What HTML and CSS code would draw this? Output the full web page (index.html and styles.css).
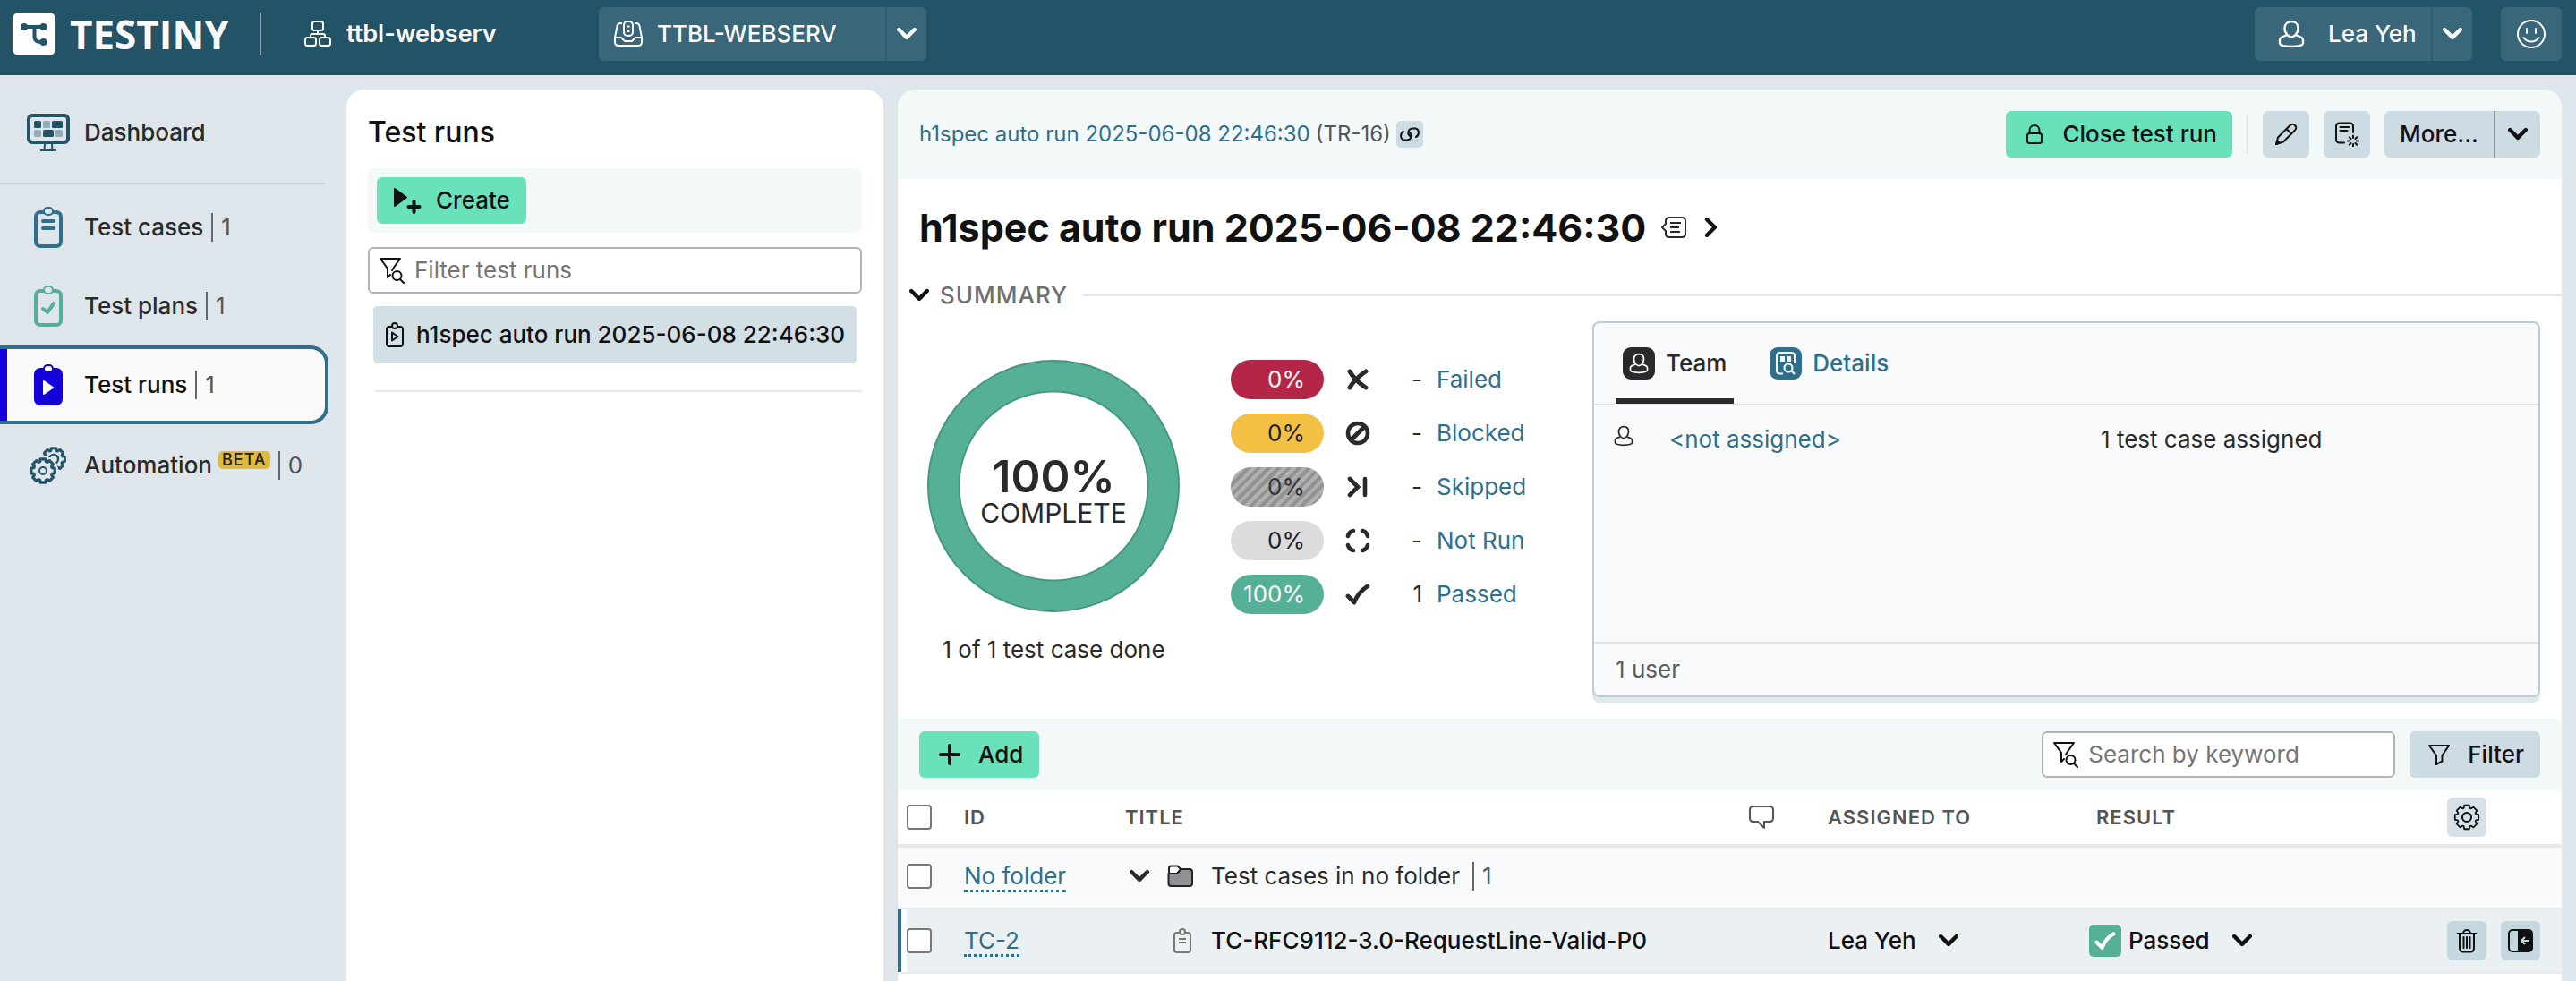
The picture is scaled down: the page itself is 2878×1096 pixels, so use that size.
FILE: index.html
```html
<!DOCTYPE html>
<html lang="en">
<head>
<meta charset="utf-8">
<meta name="viewport" content="width=device-width, initial-scale=1">
<title>Test runs - Testiny</title>
<link rel="stylesheet" href="styles.css">
</head>
<body>
<svg class="sprite" aria-hidden="true">
  <symbol id="chevron" viewBox="0 0 20 20"><path d="M2 5.500l8 8 8-8" fill="none" stroke="currentColor" stroke-width="4" stroke-linecap="round" stroke-linejoin="round"/></symbol>
  <symbol id="person" viewBox="0 0 30 32"><path d="M10.500 17C8.500 15 7.500 12.500 7.500 9.500 7.500 5 10.500 2 15 2s7.500 3 7.500 7.500c0 3-1 5.500-3 7.500M10.500 17c1.500 1.700 2.800 2.500 4.500 2.500s3-.8 4.500-2.500M10.500 17L4.500 19.500C2.500 20.300 2 21.500 2 23v3c0 2.500 5 4 13 4s13-1.500 13-4v-3c0-1.500-.5-2.700-2.500-3.500L19.500 17" fill="none" stroke="currentColor" stroke-width="2.400" stroke-linejoin="round"/></symbol>
  <symbol id="filter-search" viewBox="0 0 30 30"><path d="M10 23V13L2 2h22l-6.500 9-2.500 4M10 23l3-3" fill="none" stroke="currentColor" stroke-width="2" stroke-linejoin="round" stroke-linecap="round"/><circle cx="20.500" cy="21" r="5" fill="none" stroke="currentColor" stroke-width="2"/><path d="M24 25l4 4" stroke="currentColor" stroke-width="2" stroke-linecap="round"/></symbol>
  <symbol id="check" viewBox="0 0 28 28"><path d="M3 16l7 7C13 15 18 9 25 5" fill="none" stroke="currentColor" stroke-width="4.800" stroke-linecap="round" stroke-linejoin="round"/></symbol>
  <path id="cog" stroke-linejoin="round" d="M14.700-3.100L14.700 3.100 11.300 3.800 10.700 5.300 12.600 8.200 8.200 12.600 5.300 10.700 3.800 11.300 3.100 14.700-3.100 14.700-3.800 11.300-5.300 10.700-8.200 12.600-12.600 8.200-10.700 5.300-11.300 3.800-14.700 3.100-14.700-3.100-11.300-3.800-10.700-5.300-12.600-8.200-8.200-12.600-5.300-10.700-3.800-11.300-3.100-14.700 3.100-14.700 3.800-11.300 5.300-10.700 8.200-12.600 12.600-8.200 10.700-5.300 11.300-3.800z"/>
</svg>

<header class="topbar">
  <a class="brand" href="#">
    <svg width="48" height="48" viewBox="0 0 48 48"><rect width="48" height="48" rx="7" fill="#fff"/><path d="M12 16h23M24.500 16v11c0 4.500 2.500 6 10 6" fill="none" stroke="#225366" stroke-width="4"/><g fill="#225366"><circle cx="13" cy="16" r="4"/><circle cx="34.500" cy="16" r="4"/><circle cx="34.500" cy="33" r="4"/></g></svg>
    <span class="brand-name">TESTINY</span>
  </a>
  <a class="org" href="#">
    <svg width="32" height="30" viewBox="0 0 32 30" fill="none" stroke="currentColor" stroke-width="2"><rect x="10" y="1" width="12" height="10" rx="2.500"/><rect x="2" y="19" width="12" height="9" rx="2.500"/><rect x="18" y="19" width="12" height="9" rx="2.500"/><path d="M16 11v4M8 19v-2c0-1.500.5-2 2-2h12c1.500 0 2 .5 2 2v2"/></svg>
    ttbl-webserv
  </a>
  <div class="split dark project">
    <button type="button" class="split-main">
      <svg width="34" height="30" viewBox="0 0 34 30" fill="none" stroke="currentColor" stroke-width="2"><path d="M10 3H8C6 3 5 4 4.500 6L2 19v5c0 3 1.500 4 4 4h22c2.500 0 4-1 4-4v-5L29.500 6C29 4 28 3 26 3h-2M2 19h7l4 4h8l4-4h7"/><rect x="12" y="1" width="10" height="16" rx="4"/><path d="M17 5.500v2M17 11v2" stroke-width="3"/></svg>
      TTBL-WEBSERV
    </button>
    <button type="button" class="split-toggle" aria-label="Switch project"><svg width="22" height="22"><use href="#chevron"/></svg></button>
  </div>
  <div class="split dark account">
    <button type="button" class="split-main"><svg width="30" height="32"><use href="#person"/></svg>Lea Yeh</button>
    <button type="button" class="split-toggle" aria-label="Account menu"><svg width="22" height="22"><use href="#chevron"/></svg></button>
  </div>
  <button type="button" class="smile" aria-label="Feedback"><svg width="34" height="34" viewBox="0 0 34 34" fill="none" stroke="currentColor" stroke-width="2"><circle cx="17" cy="17" r="15"/><path d="M12 11v5M22 11v5M8.500 21c4 6 13 6 17 0" stroke-linecap="round"/></svg></button>
</header>

<div class="layout">
  <nav class="sidebar" aria-label="Main">
    <a class="nav-item dashboard" href="#">
      <svg width="48" height="42" viewBox="0 0 48 42"><rect x="2" y="2" width="44" height="30" rx="4" fill="none" stroke="#225366" stroke-width="4"/><g fill="#225366"><rect x="8" y="8" width="8" height="8" rx="1.500"/><rect x="28" y="8" width="12" height="8" rx="1.500"/><rect x="18" y="18" width="12" height="8" rx="1.500"/></g><g fill="#93adb8"><rect x="18" y="8" width="8" height="8" rx="1.500"/><rect x="8" y="18" width="8" height="8" rx="1.500"/><rect x="32" y="18" width="8" height="8" rx="1.500"/></g><path d="M20 34l-.5 7M28 34l.5 7M15 41h18" stroke="#225366" stroke-width="2"/></svg>
      <span>Dashboard</span>
    </a>
    <a class="nav-item" href="#">
      <svg width="48" height="46" viewBox="0 0 48 46" fill="none" stroke="#2f6f8b" stroke-width="4"><rect x="10" y="6" width="28" height="38" rx="5"/><path d="M18 16h12M18 24h12" stroke-linecap="round"/><rect x="19" y="1" width="10" height="8" rx="4" fill="#dee6ec" stroke-width="2"/></svg>
      <span>Test cases</span><span class="count">1</span>
    </a>
    <a class="nav-item" href="#">
      <svg width="48" height="46" viewBox="0 0 48 46" fill="none" stroke="#55b097" stroke-width="4"><rect x="10" y="6" width="28" height="38" rx="5"/><path d="M18 26l5 4 7-10" stroke-linecap="round" stroke-linejoin="round"/><rect x="19" y="1" width="10" height="8" rx="4" fill="#dee6ec" stroke-width="2"/></svg>
      <span>Test plans</span><span class="count">1</span>
    </a>
    <a class="nav-item active" href="#" aria-current="page">
      <svg width="48" height="46" viewBox="0 0 48 46"><rect x="8" y="4" width="32" height="42" rx="7" fill="#1400dc"/><rect x="19" y="1" width="10" height="8" rx="4" fill="#fafafa" stroke="#1400dc" stroke-width="2"/><path d="M19 19l10 7-10 7z" fill="#fff" stroke="#fff" stroke-width="2" stroke-linejoin="round"/></svg>
      <span>Test runs</span><span class="count">1</span>
    </a>
    <a class="nav-item automation" href="#">
      <svg width="48" height="44" viewBox="0 0 48 44" fill="none" stroke="#225366"><use href="#cog" transform="translate(30 15) scale(.84)" stroke-width="3.600"/><circle cx="30" cy="15" r="5" stroke-width="2.400"/><use href="#cog" transform="translate(18 28) scale(.9)" fill="#dee6ec" stroke="#dee6ec" stroke-width="8"/><use href="#cog" transform="translate(18 28) scale(.9)" stroke-width="3.600"/><circle cx="18" cy="28" r="4" stroke-width="2"/></svg>
      <span>Automation</span><span class="beta">BETA</span><span class="count">0</span>
    </a>
  </nav>

  <section class="runs">
    <h2>Test runs</h2>
    <div class="runs-bar">
      <button type="button" class="btn primary"><svg width="32" height="30" viewBox="0 0 32 30"><path d="M2 2l13 9.500L2 21z" fill="currentColor" stroke="currentColor" stroke-width="2" stroke-linejoin="round"/><path d="M23.500 16v12M17.500 22h12" stroke="currentColor" stroke-width="4" stroke-linecap="round"/></svg>Create</button>
    </div>
    <label class="field"><svg width="30" height="30"><use href="#filter-search"/></svg><input type="text" placeholder="Filter test runs" aria-label="Filter test runs"></label>
    <a class="run" href="#">
      <svg width="20" height="28" viewBox="0 0 20 28" fill="none" stroke="currentColor" stroke-width="2"><path d="M7 5H4C2 5 1 6 1 8v16c0 2 1 3 3 3h12c2 0 3-1 3-3V8c0-2-1-3-3-3h-3"/><rect x="7" y="1" width="6" height="6" rx="3"/><path d="M7 11.500l6.500 4.500L7 20.500z" stroke-linejoin="round"/></svg>
      <span>h1spec auto run 2025-06-08 22:46:30</span>
    </a>
    <hr>
  </section>

  <main class="main">
    <div class="main-head">
      <div class="crumb"><a href="#">h1spec auto run 2025-06-08 22:46:30</a><span>(TR-16)</span>
        <button type="button" class="copy" aria-label="Copy link"><svg width="24" height="16" viewBox="0 0 24 16" fill="none" stroke="currentColor" stroke-width="2" stroke-linecap="round"><path d="M5 5C1 7 1 14 6 14.500h3c5-.5 6-6 3-8.500M19 11c4-2 4-9-1-9.500h-3c-5 .5-6 6-3 8.500"/></svg></button>
      </div>
      <div class="actions">
        <button type="button" class="btn primary close"><svg width="18" height="22" viewBox="0 0 18 22" fill="none" stroke="currentColor" stroke-width="2"><rect x="1" y="10" width="16" height="11" rx="2.500"/><path d="M3.500 10V7c0-8 11-8 11 0v3"/></svg>Close test run</button>
        <span class="rule"></span>
        <button type="button" class="btn icon-btn" aria-label="Edit"><svg width="26" height="26" viewBox="0 0 26 26" fill="none" stroke="currentColor" stroke-width="2" stroke-linejoin="round"><path d="M2 24l2-7.500L17 3.500C19 1.500 21 1 23 3s1.500 4-.5 6L10 21.500zM13.500 7l6 6M17 3.500l-1 1"/><path d="M2 24l2-3 1.500 1.500z" fill="currentColor"/></svg></button>
        <button type="button" class="btn icon-btn" aria-label="Generate report"><svg width="28" height="28" viewBox="0 0 28 28" fill="none" stroke="currentColor" stroke-width="2" stroke-linecap="round"><path d="M11 23.500H6c-2.500 0-4-1-4-4V5c0-2.500 1-3.500 4-3.500h11c2.500 0 4 1 4 3.500v7M6.500 6h10M6.500 10h8M21 15.500v2.500M21 25v2.500M15 21.500h2.500M24.500 21.500H27M16.800 17.300l1.700 1.700M25.200 17.300l-1.700 1.700M16.800 25.700l1.700-1.700M25.200 25.700l-1.700-1.700"/></svg></button>
        <div class="split light">
          <button type="button" class="split-main">More...</button>
          <button type="button" class="split-toggle" aria-label="More actions"><svg width="22" height="22"><use href="#chevron"/></svg></button>
        </div>
      </div>
    </div>

    <div class="title">
      <h1>h1spec auto run 2025-06-08 22:46:30</h1>
      <svg width="30" height="24" viewBox="0 0 30 24" fill="none" stroke="#2a2a2a" stroke-width="2" stroke-linejoin="round"><path d="M6 8V5c0-2.500 1-4 4-4h14c3 0 4 1.500 4 4v14c0 2.500-1 4-4 4H10c-3 0-4-1.500-4-4v-3l-4-4z"/><path d="M11 7h12M11 12h10M11 17h11"/></svg>
      <svg class="turn" width="22" height="22"><use href="#chevron"/></svg>
    </div>

    <div class="legend"><svg width="22" height="22"><use href="#chevron"/></svg><span>SUMMARY</span></div>

    <div class="summary">
      <div class="overview">
        <figure class="progress">
          <div class="donut"><strong>100%</strong><span>COMPLETE</span></div>
          <figcaption>1 of 1 test case done</figcaption>
        </figure>
        <ul class="stats">
          <li><span class="pill failed">0%</span><svg width="28" height="28" viewBox="0 0 28 28"><path d="M5 5c4 7 10 13 18 18M23 5C15 10 9 16 5 23" stroke="currentColor" stroke-width="5" fill="none" stroke-linecap="round"/></svg><span class="num">-</span><a href="#">Failed</a></li>
          <li><span class="pill blocked">0%</span><svg width="28" height="28" viewBox="0 0 28 28"><circle cx="14" cy="14" r="11" stroke="currentColor" stroke-width="4.600" fill="none"/><path d="M7 21L21 7" stroke="currentColor" stroke-width="5"/></svg><span class="num">-</span><a href="#">Blocked</a></li>
          <li><span class="pill skipped">0%</span><svg width="28" height="28" viewBox="0 0 28 28"><path d="M5 5l9 9-9 9M22 5v18" stroke="currentColor" stroke-width="4.600" fill="none" stroke-linecap="round"/></svg><span class="num">-</span><a href="#">Skipped</a></li>
          <li><span class="pill notrun">0%</span><svg width="28" height="28" viewBox="0 0 28 28"><path d="M3 9c.7-3 2.500-5.300 6-6M19 3c3.500.7 5.300 3 6 6M25 19c-.7 3-2.500 5.300-6 6M9 25c-3.500-.7-5.300-3-6-6" stroke="currentColor" stroke-width="4.600" fill="none" stroke-linecap="round"/></svg><span class="num">-</span><a href="#">Not Run</a></li>
          <li><span class="pill passed">100%</span><svg width="28" height="28"><use href="#check"/></svg><span class="num">1</span><a href="#">Passed</a></li>
        </ul>
      </div>
      <section class="card">
        <div class="tabs" role="tablist">
          <button type="button" role="tab" aria-selected="true" class="tab selected"><span class="badge"><svg width="22" height="26"><use href="#person"/></svg></span>Team</button>
          <button type="button" role="tab" aria-selected="false" class="tab"><span class="badge"><svg width="22" height="26" viewBox="0 0 22 26" fill="none" stroke="currentColor" stroke-width="2"><path d="M8 24.500H5c-2.500 0-4-1-4-3.500V5c0-2.500 1-4 4-4h12c3 0 4 1.500 4 4v8"/><path d="M5 5h5v6H5zM13 5h4v6h-4z" fill="currentColor" stroke="none"/><circle cx="14" cy="18" r="4.500"/><path d="M17 21l4 4"/></svg></span>Details</button>
        </div>
        <div class="team-row"><svg width="22" height="24"><use href="#person"/></svg><a href="#">&lt;not assigned&gt;</a><span>1 test case assigned</span></div>
        <footer>1 user</footer>
      </section>
    </div>

    <div class="toolbar">
      <button type="button" class="btn primary add"><svg width="26" height="26" viewBox="0 0 26 26"><path d="M13 3v20M3 13h20" stroke="currentColor" stroke-width="4" stroke-linecap="round"/></svg>Add</button>
      <div class="find">
        <label class="field"><svg width="30" height="30"><use href="#filter-search"/></svg><input type="text" placeholder="Search by keyword" aria-label="Search by keyword"></label>
        <button type="button" class="btn secondary"><svg width="26" height="26" viewBox="0 0 26 26" fill="none" stroke="currentColor" stroke-width="2" stroke-linejoin="round"><path d="M2 3h22l-7.500 11v6.500L10 24V14z"/></svg>Filter</button>
      </div>
    </div>

    <table>
      <colgroup><col class="c-check"><col class="c-id"><col><col class="c-note"><col class="c-who"><col class="c-result"><col class="c-act"></colgroup>
      <thead>
        <tr>
          <th><input type="checkbox" aria-label="Select all"></th>
          <th>ID</th><th>TITLE</th>
          <th><svg width="28" height="28" viewBox="0 0 28 28" fill="none" stroke="#555" stroke-width="2" stroke-linejoin="round"><path d="M5 2h18c2.500 0 4 1.500 4 4v9c0 2.500-1.500 4-4 4h-6v7l-7-7H5c-2.500 0-4-1.500-4-4V6c0-2.500 1.500-4 4-4z"/></svg></th>
          <th>ASSIGNED TO</th><th class="indent">RESULT</th>
          <th><button type="button" class="mini pale" aria-label="Column settings"><svg width="30" height="30" viewBox="0 0 30 30" fill="none" stroke="currentColor" stroke-width="2"><use href="#cog" transform="translate(15 15) scale(.9)"/><circle cx="15" cy="15" r="5"/></svg></button></th>
        </tr>
      </thead>
      <tbody>
        <tr class="folder">
          <td><input type="checkbox" aria-label="Select folder"></td>
          <td><a class="id" href="#">No folder</a></td>
          <td colspan="5"><div class="line"><svg class="caret" width="22" height="22"><use href="#chevron"/></svg><svg class="kind" width="30" height="26" viewBox="0 0 30 26" stroke="#222" stroke-width="2" stroke-linejoin="round"><path d="M2 10V4c0-1.500 1-2.500 2.500-2.500h7L15 5l-4 5z" fill="#fff"/><path d="M1.500 10H11l5-5h9c2 0 3 1 3 3v13c0 2-1 3-3 3H4.500c-2 0-3-1-3-3z" fill="#8f9194"/></svg><span>Test cases in no folder</span><span class="count">1</span></div></td>
        </tr>
        <tr class="current">
          <td><input type="checkbox" aria-label="Select TC-2"></td>
          <td><a class="id" href="#">TC-2</a></td>
          <td colspan="2"><div class="line strong"><span class="caret"></span><svg class="kind" width="30" height="28" viewBox="0 0 30 28" fill="none" stroke="#777" stroke-width="2"><path d="M14 5h-3C9 5 8 6 8 8v16c0 2 1 3 3 3h12c2 0 3-1 3-3V8c0-2-1-3-3-3h-3M13 12h8M13 16h8"/><rect x="14" y="1" width="6" height="6" rx="3"/></svg><span>TC-RFC9112-3.0-RequestLine-Valid-P0</span></div></td>
          <td><button type="button" class="pick">Lea Yeh<svg width="22" height="22"><use href="#chevron"/></svg></button></td>
          <td><button type="button" class="pick"><span class="state"><span class="ok"><svg width="24" height="24"><use href="#check"/></svg></span>Passed</span><svg width="22" height="22"><use href="#chevron"/></svg></button></td>
          <td><div class="row-act"><button type="button" class="mini" aria-label="Delete"><svg width="24" height="28" viewBox="0 0 24 28" fill="none" stroke="currentColor" stroke-width="2" stroke-linecap="round"><path d="M1.500 6h21M8 6c0-5.500 8-5.500 8 0M4 6v16c0 3 1 4.500 4 4.500h8c3 0 4-1.500 4-4.500V6M8.500 10v12M12 10v12M15.500 10v12"/></svg></button><button type="button" class="mini" aria-label="Open panel"><svg width="30" height="28" viewBox="0 0 30 28"><rect x="2" y="2" width="26" height="24" rx="4" fill="none" stroke="currentColor" stroke-width="2"/><path d="M12 2h13c2 0 3 1 3 3v18c0 2-1 3-3 3H12z" fill="currentColor"/><path d="M25 14h-9M20 10l-4 4 4 4" fill="none" stroke="#c5d7df" stroke-width="2"/></svg></button></div></td>
        </tr>
      </tbody>
    </table>
  </main>
</div>
</body>
</html>
```
FILE: styles.css
```css
* { box-sizing: border-box; }

body {
  margin: 0;
  min-height: 100vh;
  display: flex;
  flex-direction: column;
  background: #dee6ec;
  color: #2a2a2a;
  font: 400 26px/32px Inter, "Liberation Sans", sans-serif;
}

h1, h2, figure, ul { margin: 0; padding: 0; }
a { color: #2f6f8b; text-decoration: none; }
svg { flex: none; display: block; }
.sprite { position: absolute; width: 0; height: 0; }

button {
  display: flex;
  align-items: center;
  border: 0;
  padding: 0;
  background: none;
  color: #111;
  font: inherit;
  font-weight: 500;
  white-space: nowrap;
}

/* Top bar */
.topbar {
  display: flex;
  align-items: center;
  height: 84px;
  padding: 8px 16px 16px 14px;
  background: #225366;
}
.brand { display: flex; align-items: center; gap: 16px; width: 278px; height: 48px; border-right: 2px solid #8fa6b0; }
.brand-name { color: #fafafa; font: 700 44px/48px "Open Sans", "Noto Sans", sans-serif; }
.org { display: flex; align-items: center; gap: 16px; width: 377px; padding-left: 47px; color: #fafafa; font-size: 27px; font-weight: 600; }

.split { display: flex; border-radius: 6px; overflow: hidden; }
.split-toggle { justify-content: center; }
.dark { height: 60px; background: #3a667a; }
.dark button { color: #fafafa; }
.dark .split-toggle { border-left: 2px solid #315c70; }
.project { width: 366px; }
.project .split-main { flex: 1; gap: 15px; padding-left: 16px; }
.project .split-toggle { width: 46px; }
.account { margin-left: auto; }
.account .split-main { width: 197px; gap: 26px; padding-left: 26px; }
.account .split-toggle { width: 46px; }
.smile { justify-content: center; width: 68px; height: 60px; margin-left: 32px; border-radius: 6px; background: #3a667a; color: #fafafa; }

.layout { flex: 1; display: flex; gap: 16px; padding-right: 16px; }

/* Sidebar */
.sidebar { flex: none; width: 371px; padding: 20px 4px 0 0; }
.nav-item { display: flex; align-items: center; height: 88px; padding-left: 30px; color: #2a2a2a; font-weight: 500; }
.nav-item svg { margin-right: 16px; }
.dashboard { height: 102px; margin: 0 4px 4px 0; padding-bottom: 12px; border-bottom: 2px solid #c9d1d8; }
.count { margin-left: 9px; padding-left: 9px; border-left: 2px solid #666; color: #555; font-weight: 400; line-height: 32px; }
.active { border: 4px solid #2f6f8b; border-left: 0; border-radius: 0 20px 20px 0; background: #fafafa; box-shadow: inset 8px 0 #1400dc; color: #111; }
.automation { height: 92px; }
.beta { align-self: flex-start; margin: 30px 0 0 7px; padding: 0 4px; border-radius: 5px; background: #e1b941; color: #222; font-size: 18px; line-height: 20px; letter-spacing: 1px; }

/* Run list */
.runs { flex: none; width: 600px; margin-top: 16px; padding: 28px 24px; border-radius: 20px 20px 0 0; background: #fff; }
.runs h2 { margin-bottom: 20px; color: #111; font-size: 32px; font-weight: 500; line-height: 40px; }
.runs-bar { padding: 10px; margin-bottom: 16px; border-radius: 8px; background: #f3f8f9; }
.btn { height: 52px; border-radius: 6px; }
.primary { gap: 16px; padding: 0 18px; background: #69e2bb; }
.field { display: flex; align-items: center; gap: 10px; height: 52px; padding: 0 10px; border: 2px solid #b3b3b3; border-radius: 6px; background: #fff; color: #111; }
.field input { flex: 1; min-width: 0; padding: 0; border: 0; outline: 0; background: none; color: inherit; font: inherit; }
.field input::placeholder { color: #757575; opacity: 1; }
.run { display: flex; align-items: center; gap: 14px; height: 64px; margin: 14px 6px 30px; padding-left: 14px; border-radius: 5px; background: #d2dfe5; color: #111; font-weight: 500; white-space: nowrap; }
.runs hr { margin: 0 0 0 8px; border: 0; border-top: 2px solid #e6e7e8; }

/* Run detail */
.main { flex: 1; min-width: 0; margin-top: 16px; border-radius: 20px 20px 0 0; background: #fff; overflow: hidden; }
.main-head { display: flex; justify-content: space-between; align-items: flex-start; height: 100px; padding: 24px 24px 0; background: #f3f8f9; }
.crumb { display: flex; align-items: center; gap: 6px; height: 52px; color: #555; font-size: 24px; }
.copy { justify-content: center; width: 30px; height: 30px; border-radius: 5px; background: #cddce3; }
.actions { display: flex; align-items: center; gap: 16px; }
.close { gap: 22px; padding: 0 17px 0 23px; }
.rule { width: 2px; height: 44px; background: #d8dcde; }
.icon-btn { justify-content: center; width: 52px; background: #cddce3; }
.light { height: 52px; background: #cddce3; }
.light .split-main { width: 122px; justify-content: center; }
.light .split-toggle { width: 52px; border-left: 2px solid #8f999e; }

.title { display: flex; align-items: center; gap: 16px; height: 108px; padding-left: 24px; color: #111; }
.title h1 { font-size: 43px; font-weight: 700; line-height: 56px; }
.turn { transform: rotate(-90deg); }

.legend { display: flex; align-items: center; gap: 12px; height: 44px; padding-left: 13px; color: #111; }
.legend span { color: #707070; font-weight: 500; letter-spacing: 1px; }
.legend::after { content: ""; flex: 1; margin-left: 5px; border-top: 2px solid #e6e7e8; }

.summary { display: flex; padding: 7px 24px 24px; }
.overview { flex: none; display: flex; gap: 48px; width: 752px; padding-top: 43px; }
.progress { width: 300px; text-align: center; }
.donut { display: flex; flex-direction: column; align-items: center; justify-content: center; width: 282px; height: 282px; margin: 0 auto 26px; padding-top: 10px; border: 2px solid #479780; border-radius: 50%; background: radial-gradient(circle closest-side at center, #fff 104px, #479780 105px, #479780 106px, #55b097 107px); }
.donut strong { font-size: 50px; font-weight: 600; line-height: 50px; }
.donut span { font-size: 30px; line-height: 32px; }
.stats { display: flex; flex-direction: column; gap: 16px; list-style: none; }
.stats li { display: grid; grid-template-columns: 104px 36px 42px auto; align-items: center; column-gap: 16px; height: 44px; }
.stats svg { margin-left: 8px; }
.num { text-align: right; }
.pill { height: 44px; padding-right: 21px; border-radius: 22px; color: #222; line-height: 44px; text-align: right; }
.failed { background: #b32648; color: #fafafa; }
.blocked { background: #f3c044; }
.skipped { background: repeating-linear-gradient(-45deg, #929292 0 4px, #b0b0b0 4px 8px); color: #333; }
.notrun { background: #dcdcdc; }
.passed { background: #55b097; color: #fafafa; }

.card { flex: 1; min-width: 0; display: flex; flex-direction: column; height: 420px; border: 2px solid #b8ced8; border-radius: 8px; background: #f9fafc; box-shadow: 0 6px #dfe9ec; }
.tabs { display: flex; gap: 32px; height: 92px; padding-left: 24px; border-bottom: 2px solid #dfe1e3; }
.tab { gap: 12px; padding: 0 8px; color: #2f6f8b; }
.tab.selected { color: #2a2a2a; box-shadow: inset 0 -6px #2a2a2a; }
.badge { display: flex; align-items: center; justify-content: center; width: 36px; height: 36px; border-radius: 9px; background: #2f6f8b; color: #fff; }
.selected .badge { background: #2a2a2a; }
.team-row { flex: 1; display: grid; grid-template-columns: 22px 442px 1fr; column-gap: 40px; align-items: start; padding: 22px; }
.card footer { padding: 13px 24px; border-top: 2px solid #dfe1e3; color: #5c5c5c; }

.toolbar { display: flex; align-items: center; justify-content: space-between; height: 80px; padding: 0 24px; background: #f3f8f9; }
.add { padding-left: 21px; gap: 19px; }
.find { display: flex; gap: 16px; }
.find .field { width: 395px; }
.secondary { gap: 19px; padding: 0 18px 0 20px; background: #cddce3; }

/* Test case table */
table { width: 100%; table-layout: fixed; border-collapse: separate; border-spacing: 0; }
.c-check { width: 74px; }
.c-id { width: 180px; }
.c-note { width: 88px; }
.c-who { width: 292px; }
.c-result { width: 400px; }
.c-act { width: 128px; }
th, td { padding: 0; text-align: left; vertical-align: middle; white-space: nowrap; }
th { height: 64px; border-bottom: 4px solid #e6e8e9; color: #555; font-size: 22px; font-weight: 600; letter-spacing: 1px; }
th.indent { padding-left: 8px; }
td { border-bottom: 2px solid #e8eaeb; }
.folder td { height: 69px; padding-bottom: 3px; background: #f9fafc; }
.current td { height: 72px; background: #ebf0f3; }
.current td:first-child { background: linear-gradient(90deg, #2f6f8b 4px, #fff 4px 10px, #ebf0f3 10px); }
input[type="checkbox"] { appearance: none; display: block; width: 28px; height: 28px; margin: 0 0 0 10px; border: 2px solid #777; border-radius: 4px; background: #fff; }
.id { border-bottom: 3px dotted #2f6f8b; }
.line { display: flex; align-items: center; }
.caret { width: 22px; margin: 0 20px 0 5px; }
.kind { margin-right: 19px; }
.line .count { margin-left: 14px; }
.strong { color: #111; font-weight: 500; }
.pick { gap: 25px; }
.state { display: flex; align-items: center; gap: 8px; }
.ok { display: flex; align-items: center; justify-content: center; width: 36px; height: 36px; border-radius: 5px; background: #55b097; color: #fff; }
.row-act { display: flex; gap: 16px; }
.mini { justify-content: center; width: 44px; height: 44px; border-radius: 6px; background: #c5d7df; }
.pale { background: #d5e1e7; }
```
